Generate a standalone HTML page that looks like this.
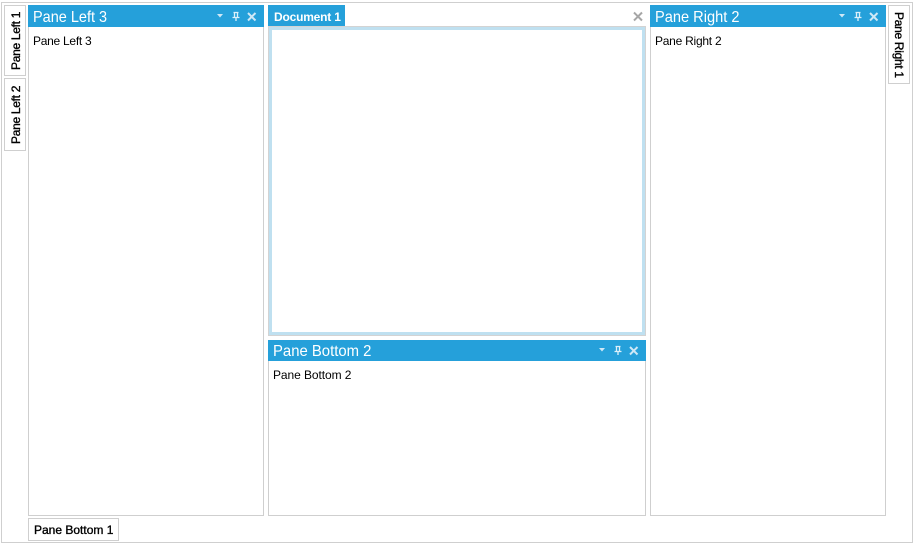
<!DOCTYPE html>
<html><head><meta charset="utf-8">
<style>
html,body{margin:0;padding:0;background:#fff;width:914px;height:545px;overflow:hidden}
body{position:relative;font-family:"Liberation Sans",sans-serif;color:#000}
.a{position:absolute;box-sizing:border-box}
.b{border:1px solid #cfcfcf;background:#fff}
.h{background:#25a0da}
.t{position:absolute;color:#fff;font-size:16px;line-height:22px;white-space:nowrap;transform-origin:0 0}
.c{position:absolute;font-size:12px;line-height:14px;white-space:nowrap}
.v{position:absolute;font-size:12px;-webkit-text-stroke:.35px #000;letter-spacing:-.3px;line-height:14px;white-space:nowrap;transform-origin:0 0}
svg{position:absolute;overflow:visible}
</style></head><body>
<div class="a b" style="left:1px;top:2px;width:912px;height:541px"></div>

<div class="a b" style="left:4px;top:5px;width:22px;height:71px"></div>
<div class="v" style="left:9px;top:70px;transform:rotate(-90deg)">Pane Left 1</div>
<div class="a b" style="left:4px;top:78px;width:22px;height:73px"></div>
<div class="v" style="left:9px;top:144px;transform:rotate(-90deg)">Pane Left 2</div>

<div class="a b" style="left:28px;top:5px;width:236px;height:511px"></div>
<div class="a h" style="left:28px;top:5px;width:236px;height:22px"></div>
<div class="t" style="left:33px;top:7px;transform:scaleX(.905)">Pane Left 3</div>
<div class="c" style="left:33px;top:34px;letter-spacing:-.27px">Pane Left 3</div>
<svg style="left:0;top:0" width="1" height="1"><g transform="translate(218,12)"><path d="M-1 2h6L2 5.500z" fill="#cfe8f6"/><path d="M15.500 .5h5M16.500 .5v5M19.500 .5v5M14.500 5.500h7M18 5.500v3.500" fill="none" stroke="#dcf0fa" stroke-width="1.300"/><path d="M30 1l7.500 7.500M37.500 1l-7.500 7.500" stroke="#cfe8f6" stroke-width="2" fill="none"/></g></svg>

<div class="a h" style="left:268px;top:5px;width:77px;height:21px"></div>
<div class="t" style="left:274px;top:6px;font-size:12px;font-weight:bold;letter-spacing:-.2px">Document 1</div>
<svg style="left:0;top:0" width="1" height="1"><path d="M634 12.500l8 8M642 12.500l-8 8" stroke="#a6a6a6" stroke-width="2" fill="none"/></svg>
<div class="a" style="left:268px;top:26px;width:378px;height:310px;border:1px solid #d3d3d3;background:#fff"></div>
<div class="a" style="left:269px;top:27px;width:376px;height:308px;border:3px solid #bfe0f0;background:#fff"></div>

<div class="a b" style="left:268px;top:340px;width:378px;height:176px"></div>
<div class="a h" style="left:268px;top:340px;width:378px;height:21px"></div>
<div class="t" style="left:273px;top:341px;transform:scaleX(.93)">Pane Bottom 2</div>
<div class="c" style="left:273px;top:368px;letter-spacing:-.08px">Pane Bottom 2</div>
<svg style="left:0;top:0" width="1" height="1"><g transform="translate(600,346)"><path d="M-1 2h6L2 5.500z" fill="#cfe8f6"/><path d="M15.500 .5h5M16.500 .5v5M19.500 .5v5M14.500 5.500h7M18 5.500v3.500" fill="none" stroke="#dcf0fa" stroke-width="1.300"/><path d="M30 1l7.500 7.500M37.500 1l-7.500 7.500" stroke="#cfe8f6" stroke-width="2" fill="none"/></g></svg>

<div class="a b" style="left:650px;top:5px;width:236px;height:511px"></div>
<div class="a h" style="left:650px;top:5px;width:236px;height:22px"></div>
<div class="t" style="left:655px;top:7px;transform:scaleX(.913)">Pane Right 2</div>
<div class="c" style="left:655px;top:34px;letter-spacing:-.25px">Pane Right 2</div>
<svg style="left:0;top:0" width="1" height="1"><g transform="translate(840,12)"><path d="M-1 2h6L2 5.500z" fill="#cfe8f6"/><path d="M15.500 .5h5M16.500 .5v5M19.500 .5v5M14.500 5.500h7M18 5.500v3.500" fill="none" stroke="#dcf0fa" stroke-width="1.300"/><path d="M30 1l7.500 7.500M37.500 1l-7.500 7.500" stroke="#cfe8f6" stroke-width="2" fill="none"/></g></svg>

<div class="a b" style="left:888px;top:5px;width:22px;height:79px"></div>
<div class="v" style="left:906px;top:12px;transform:rotate(90deg)">Pane Right 1</div>

<div class="a b" style="left:28px;top:518px;width:91px;height:23px"></div>
<div class="c" style="left:34px;top:523px;-webkit-text-stroke:.35px #000">Pane Bottom 1</div>
</body></html>
